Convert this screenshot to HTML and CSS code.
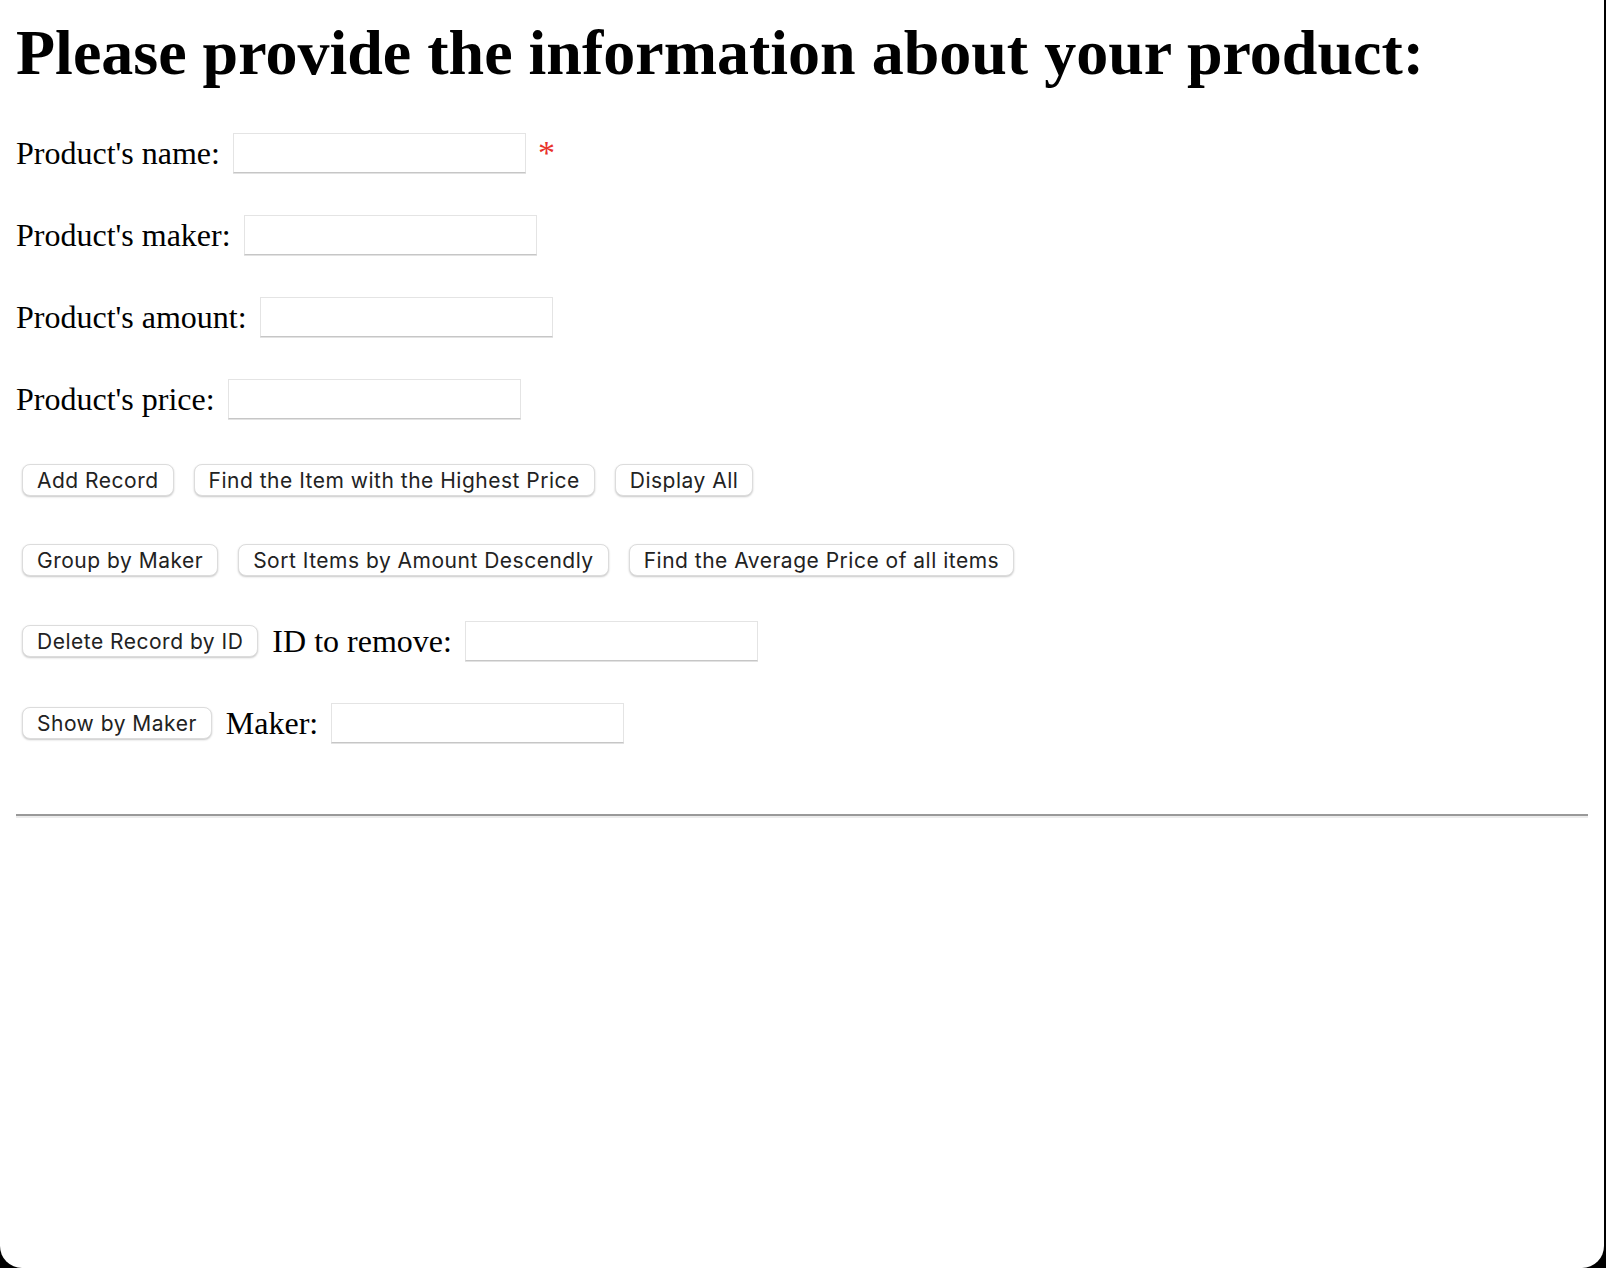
FILE: index.html
```html
<!DOCTYPE html>
<html lang="en">
<head>
<meta charset="utf-8">
<title>Products</title>
<link rel="stylesheet" href="styles.css">
</head>
<body>
<div class="window">
  <h1 class="title">Please provide the information about your product:</h1>
  <form class="form">
    <div class="row">
      <label class="label" for="name">Product's name:</label>
      <input class="input" id="name" type="text">
      <span class="required">*</span>
    </div>
    <div class="row">
      <label class="label" for="maker">Product's maker:</label>
      <input class="input" id="maker" type="text">
    </div>
    <div class="row">
      <label class="label" for="amount">Product's amount:</label>
      <input class="input" id="amount" type="text">
    </div>
    <div class="row">
      <label class="label" for="price">Product's price:</label>
      <input class="input" id="price" type="text">
    </div>
    <div class="row row-buttons">
      <button class="btn" type="button">Add Record</button>
      <button class="btn" type="button">Find the Item with the Highest Price</button>
      <button class="btn" type="button">Display All</button>
    </div>
    <div class="row row-buttons">
      <button class="btn" type="button">Group by Maker</button>
      <button class="btn" type="button">Sort Items by Amount Descendly</button>
      <button class="btn" type="button">Find the Average Price of all items</button>
    </div>
    <div class="row">
      <button class="btn" type="button">Delete Record by ID</button>
      <label class="label" for="remove">ID to remove:</label>
      <input class="input" id="remove" type="text">
    </div>
    <div class="row">
      <button class="btn" type="button">Show by Maker</button>
      <label class="label" for="bymaker">Maker:</label>
      <input class="input" id="bymaker" type="text">
    </div>
  </form>
  <hr class="divider">
</div>
</body>
</html>
```
FILE: styles.css
```css
html, body {
  margin: 0;
  padding: 0;
  background: #000;
}

.window {
  box-sizing: border-box;
  width: 1604px;
  height: 1268px;
  padding: 16px 16px 0 16px;
  background: #fff;
  border-radius: 0 0 22px 22px;
  font-family: "Liberation Serif", "Times New Roman", serif;
  font-size: 32px;
  color: #000;
  overflow: hidden;
}

.title {
  margin: 0;
  font-size: 64px;
  font-weight: bold;
  line-height: 74px;
}

.form {
  display: flex;
  flex-direction: column;
  gap: 42px;
  margin-top: 43px;
}

.row {
  display: flex;
  align-items: center;
  height: 40px;
}

.row-buttons {
  height: 38px;
  gap: 14px;
}

.label {
  margin-left: 14px;
  margin-right: 13px;
  white-space: nowrap;
}

.row > .label:first-child {
  margin-left: 0;
}

.input {
  box-sizing: border-box;
  width: 293px;
  height: 40px;
  margin: 0;
  padding: 0 6px;
  border: 1px solid #e4e4e4;
  border-bottom-color: #c6c6c6;
  box-shadow: 0 1px 0 #e2e2e2;
  background: #fff;
  font: inherit;
  outline: none;
}

.required {
  margin-left: 12px;
  color: #e8322b;
  align-self: flex-start;
  font-size: 34px;
  line-height: 40px;
}

.btn {
  box-sizing: border-box;
  height: 32px;
  margin: 0 0 0 6px;
  padding: 0 14px;
  border: 1px solid #dcdcdc;
  border-radius: 8px;
  background: #fff;
  box-shadow: 0 1px 2px rgba(0, 0, 0, 0.22);
  font-family: Inter, "Noto Sans", sans-serif;
  font-size: 21px;
  letter-spacing: 0.5px;
  color: #222;
  white-space: nowrap;
}

.divider {
  margin: 71px 0 0 0;
  height: 0;
  border: 0;
  border-top: 2px solid #999;
  border-bottom: 2px solid #ececec;
}
```
